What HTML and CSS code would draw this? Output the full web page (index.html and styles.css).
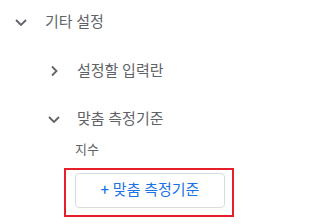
FILE: index.html
```html
<!DOCTYPE html>
<html lang="ko">
<head>
<meta charset="utf-8">
<link rel="stylesheet" href="styles.css">
</head>
<body>
<div class="tree">
  <div class="row lvl1">
    <span class="chev"><svg width="24" height="24" viewBox="0 0 24 24"><polyline points="7,10 12,15 17,10" fill="none" stroke="#5f6368" stroke-width="1.8"/></svg></span>
    <span class="label">기타 설정</span>
  </div>
  <div class="row lvl2 r2">
    <span class="chev"><svg width="24" height="24" viewBox="0 0 24 24"><polyline points="10,7.5 14.5,12 10,16.5" fill="none" stroke="#5f6368" stroke-width="1.8"/></svg></span>
    <span class="label">설정할 입력란</span>
  </div>
  <div class="row lvl2 r3">
    <span class="chev"><svg width="24" height="24" viewBox="0 0 24 24"><polyline points="7,10 12,15 17,10" fill="none" stroke="#5f6368" stroke-width="1.8"/></svg></span>
    <span class="label">맞춤 측정기준</span>
  </div>
  <div class="content">
    <div class="sub">지수</div>
    <div class="highlight">
      <button class="add-btn">+ 맞춤 측정기준</button>
    </div>
  </div>
</div>
</body>
</html>
```
FILE: styles.css
```css
html, body {
  margin: 0;
  padding: 0;
  background: #ffffff;
}
body {
  width: 319px;
  height: 224px;
  overflow: hidden;
  font-family: Roboto, "Noto Sans CJK KR", sans-serif;
  font-size: 15px;
  color: #5f6368;
}
.tree {
  display: flex;
  flex-direction: column;
}
.row {
  display: flex;
  align-items: center;
  height: 44px;
}
.chev {
  width: 24px;
  height: 24px;
  display: flex;
}
.lvl1 {
  padding-left: 9px;
}
.lvl1 .chev {
  margin-right: 12px;
}
.lvl2 {
  padding-left: 42px;
}
.lvl2 .chev {
  margin-right: 11px;
}
.r2 {
  margin-top: 5px;
}
.r3 {
  margin-top: 4px;
}
.label {
  line-height: 20px;
}
.content {
  padding-left: 64px;
  display: flex;
  flex-direction: column;
}
.sub {
  font-size: 13px;
  line-height: 18px;
  padding-left: 11px;
  margin-top: 0;
}
.highlight {
  margin-top: 9px;
  border: 2px solid #e5202a;
  padding: 3px 7px 0 9px;
  width: 150px;
  height: 42px;
}
.add-btn {
  display: block;
  width: 150px;
  height: 35px;
  border: 1px solid #dadce0;
  border-radius: 4px;
  background: #ffffff;
  color: #1a73e8;
  font-family: Roboto, "Noto Sans CJK KR", sans-serif;
  font-size: 15px;
  padding: 0;
  line-height: 33px;
}
```
